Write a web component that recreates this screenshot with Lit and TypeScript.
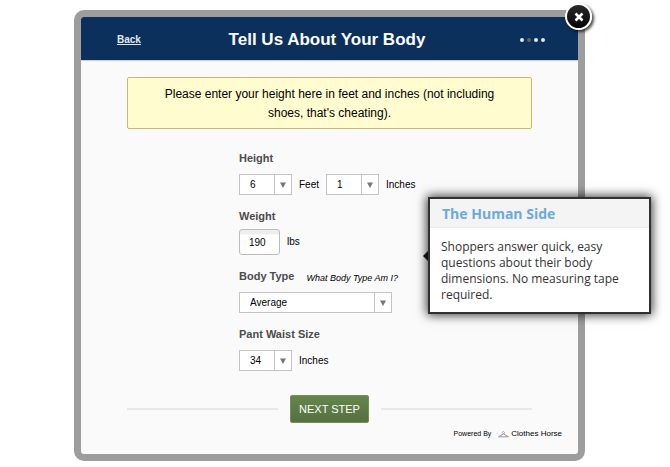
import { LitElement, html, css } from "lit";
import { customElement, property } from "lit/decorators.js";

@customElement("drop-down")
class DropDown extends LitElement {
  @property() label = "";
  @property({ attribute: false }) options: string[] = [];
  @property() value = "";

  static styles = css`
    :host {
      display: block;
      width: 53px;
    }
    .box {
      position: relative;
      height: 21px;
    }
    select {
      appearance: none;
      display: block;
      box-sizing: border-box;
      width: 100%;
      height: 100%;
      margin: 0;
      padding: 0 20px 0 10px;
      border: 1px solid #c4c4c4;
      border-radius: 0;
      background: #fff;
      color: #000;
      font: 10px "Liberation Sans", Arial, sans-serif;
    }
    .arrow {
      position: absolute;
      top: 1px;
      right: 1px;
      bottom: 1px;
      width: 16px;
      display: flex;
      align-items: center;
      justify-content: center;
      border-left: 1px solid #c4c4c4;
      pointer-events: none;
    }
  `;

  render() {
    return html`<div class="box">
      <select aria-label=${this.label}>
        ${this.options.map(
          (o) => html`<option ?selected=${o === this.value}>${o}</option>`
        )}
      </select>
      <span class="arrow">
        <svg width="6" height="6" viewBox="0 0 6 6"><path d="M0 0.5h6L3 6z" fill="#777" /></svg>
      </span>
    </div>`;
  }
}

@customElement("app-root")
class AppRoot extends LitElement {
  static styles = css`
    :host {
      display: block;
      padding: 10px 85px 6px 74px;
      background: #fff;
      color: #000;
      font: 10px/14px "Liberation Sans", Arial, sans-serif;
    }
    .modal {
      position: relative;
      border: 7px solid #9d9d9d;
      border-radius: 10px;
      background: #fafafa;
    }
    header {
      display: grid;
      grid-template-columns: 1fr auto 1fr;
      align-items: center;
      height: 43px;
      padding: 2px 33px 0 36px;
      box-sizing: border-box;
      border-radius: 3px 3px 0 0;
      background: #0b305c;
      color: #fff;
      box-shadow: 0 1px 1px #ccc;
    }
    .back {
      justify-self: start;
      color: #e4e9f0;
      font-weight: bold;
    }
    h1 {
      margin: 0;
      padding-right: 8px;
      font-size: 17px;
      line-height: 24px;
    }
    .steps {
      justify-self: end;
      display: flex;
      gap: 3px;
    }
    .step {
      width: 4px;
      height: 4px;
      border-radius: 50%;
      background: #e3e8ee;
    }
    .current {
      background: #656565;
    }
    .content {
      padding: 17px 46px 0;
    }
    .notice {
      margin: 0;
      padding: 7px 28px 5px;
      border: 1px solid #d0b676;
      border-radius: 2px;
      background: #fffccf;
      font-size: 12px;
      line-height: 19px;
      text-align: center;
    }
    form {
      margin: 0;
    }
    .fields {
      width: 181px;
      margin: 22px auto 0;
      display: grid;
      gap: 14px;
    }
    .caption {
      display: flex;
      align-items: center;
      gap: 12px;
      height: 14px;
      color: #4c4c4c;
      font-size: 11px;
      font-weight: bold;
    }
    .field {
      display: grid;
      gap: 9px;
    }
    .close-set {
      gap: 6px;
    }
    .help {
      padding-top: 4px;
      color: #000;
      font-size: 9px;
      font-style: italic;
      font-weight: normal;
      text-decoration: none;
      white-space: nowrap;
    }
    .row {
      display: flex;
      align-items: center;
      gap: 7px;
    }
    .weight {
      box-sizing: border-box;
      width: 41px;
      height: 26px;
      margin: 0;
      padding: 0 9px;
      border: 1px solid #bbb;
      border-radius: 3px;
      background: linear-gradient(#eee 0 4px, #fff 5px);
      color: #000;
      font: 10px "Liberation Sans", Arial, sans-serif;
    }
    .wide {
      width: 153px;
    }
    .actions {
      display: flex;
      align-items: center;
      gap: 12px;
      margin-top: 24px;
    }
    .rule {
      flex: 1;
      height: 2px;
      background: #e8e8e8;
    }
    .next {
      height: 28px;
      padding: 0 8px;
      border: 1px solid #71905a;
      border-radius: 2px;
      background: linear-gradient(#64864a, #567040);
      color: #fff;
      font: 11px "Liberation Sans", Arial, sans-serif;
      white-space: nowrap;
    }
    footer {
      display: flex;
      align-items: center;
      justify-content: flex-end;
      gap: 7px;
      padding: 4px 16px 13px;
      font-size: 7px;
    }
    .brand {
      display: flex;
      align-items: center;
      gap: 2px;
      font-size: 8px;
    }
    .close {
      position: absolute;
      top: -14px;
      right: -14px;
      display: block;
      width: 27px;
      height: 27px;
      padding: 0;
      border: 2px solid #fff;
      border-radius: 50%;
      background: linear-gradient(#2a2a2a, #050505);
      box-shadow: 2px 2px 3px rgba(0, 0, 0, 0.7);
    }
    .close svg {
      display: block;
      margin: auto;
    }
    .tip {
      position: absolute;
      top: 180px;
      right: -73px;
      box-sizing: border-box;
      width: 223px;
      border: 2px solid #303030;
      background: #fff;
      box-shadow: 0 0 10px 1px rgba(0, 0, 0, 0.8);
      color: #333;
      font: 12px/16px "Open Sans", sans-serif;
    }
    .tip::before {
      content: "";
      position: absolute;
      top: 52px;
      left: -7px;
      border: 5px solid transparent;
      border-left: 0;
      border-right-color: #111;
    }
    h2 {
      margin: 0;
      padding: 5px 12px 3px;
      border-bottom: 1px solid #eaeaea;
      background: #f4f4f4;
      color: #6baadd;
      font-size: 14px;
      line-height: 20px;
    }
    .tip p {
      margin: 0;
      padding: 11px 30px 9px 11px;
    }
  `;

  render() {
    return html`
      <main class="modal">
        <header>
          <a class="back" href="#back">Back</a>
          <h1>Tell Us About Your Body</h1>
          <div class="steps" role="img" aria-label="Step 2 of 4">
            <span class="step"></span><span class="step current"></span
            ><span class="step"></span><span class="step"></span>
          </div>
        </header>
        <form @submit=${(e: Event) => e.preventDefault()}>
          <div class="content">
            <p class="notice">
              Please enter your height here in feet and inches (not including
              shoes, that's cheating).
            </p>
            <div class="fields">
              <div class="field">
                <span class="caption">Height</span>
                <div class="row">
                  <drop-down label="Feet" .options=${["4", "5", "6", "7"]} value="6"></drop-down>
                  <span>Feet</span>
                  <drop-down label="Inches" .options=${["0", "1", "2", "3"]} value="1"></drop-down>
                  <span>Inches</span>
                </div>
              </div>
              <div class="field close-set">
                <label class="caption" for="weight">Weight</label>
                <div class="row">
                  <input class="weight" id="weight" type="text" value="190" />
                  <span>lbs</span>
                </div>
              </div>
              <div class="field">
                <div class="caption">
                  <span>Body Type</span>
                  <a class="help" href="#body-type">What Body Type Am I?</a>
                </div>
                <drop-down class="wide" label="Body Type" .options=${["Slim", "Average", "Athletic"]} value="Average"></drop-down>
              </div>
              <div class="field">
                <span class="caption">Pant Waist Size</span>
                <div class="row">
                  <drop-down label="Pant Waist Size" .options=${["32", "33", "34", "36"]} value="34"></drop-down>
                  <span>Inches</span>
                </div>
              </div>
            </div>
            <div class="actions">
              <span class="rule"></span>
              <button class="next" type="submit">NEXT STEP</button>
              <span class="rule"></span>
            </div>
          </div>
        </form>
        <footer>
          <span>Powered By</span>
          <span class="brand">
            <svg width="11" height="7" viewBox="0 0 11 7" fill="none" stroke="#999">
              <path d="M4 1.5Q5.500-.5 6.500 1.500L5.500 3L.5 5.800H10.500L5.500 3" />
            </svg>
            Clothes Horse
          </span>
        </footer>
        <aside class="tip">
          <h2>The Human Side</h2>
          <p>
            Shoppers answer quick, easy questions about their body dimensions.
            No measuring tape required.
          </p>
        </aside>
        <button class="close" type="button" aria-label="Close">
          <svg width="10" height="10" viewBox="0 0 10 10" stroke="#fff" stroke-width="2.600">
            <path d="M1.500 1.500l7 7M8.500 1.500l-7 7" />
          </svg>
        </button>
      </main>
    `;
  }
}
